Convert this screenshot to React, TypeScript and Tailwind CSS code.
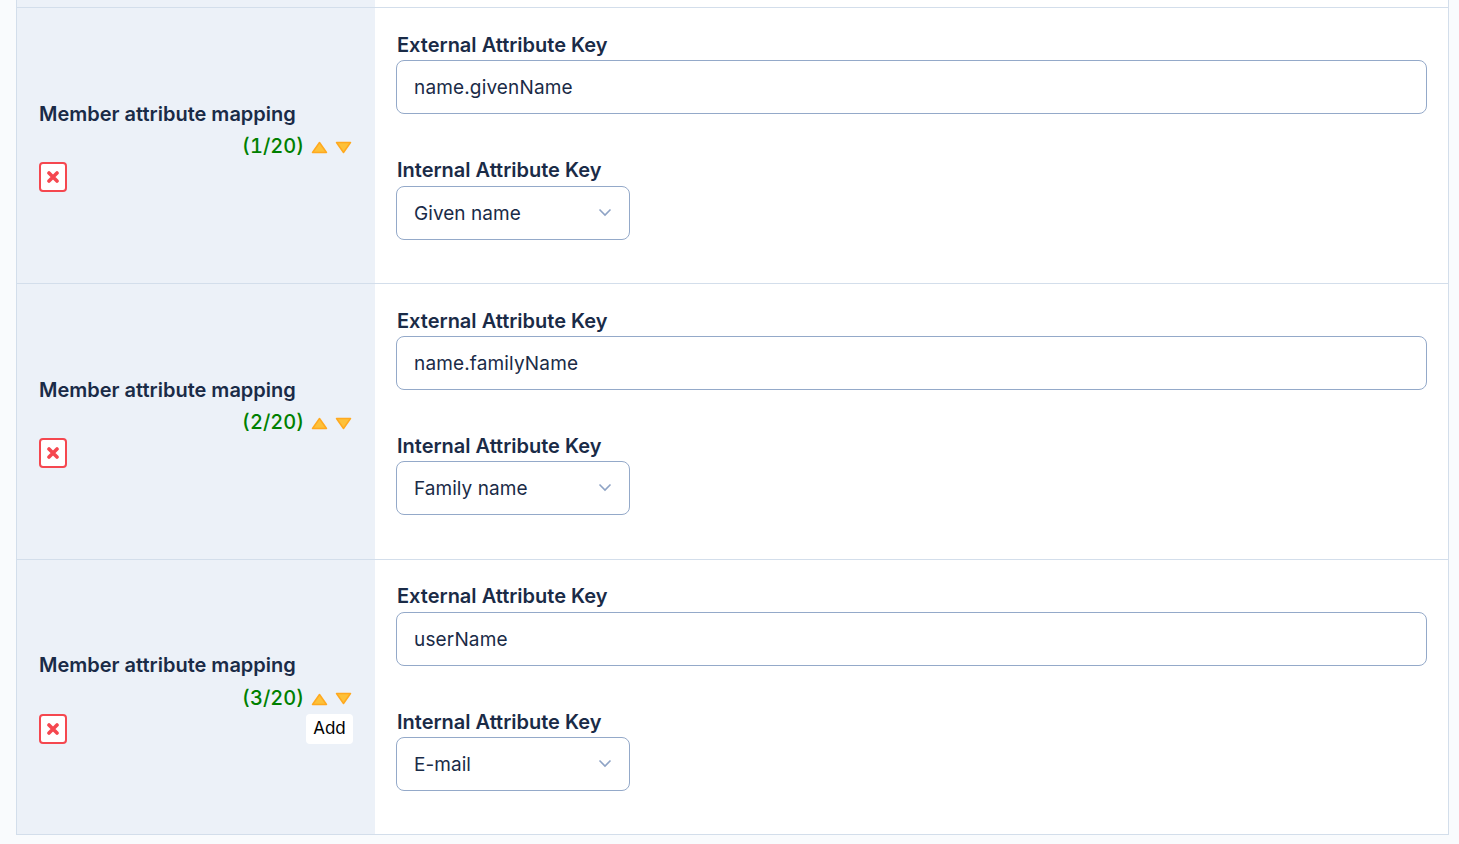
import React from "react";

const rows = [
  { n: 1, ext: "name.givenName", int: "Given name", h: "h-[276px]", gap: "mt-[41px] mb-[1px]", top: "pt-[22px]", lab: "" },
  { n: 2, ext: "name.familyName", int: "Family name", h: "h-[276px]", gap: "mt-[41px]", top: "pt-[22px]", lab: "" },
  { n: 3, ext: "userName", int: "E-mail", h: "h-[275px]", gap: "mt-[41px]", top: "pt-[21px]", lab: "mb-[1px]", add: true },
];

function Up() {
  return (
    <svg width="17" height="13" viewBox="0 0 17 13" aria-hidden="true">
      <path d="M8.5 1.5 L15.5 11.5 L1.5 11.5 Z" fill="#fdc13a" stroke="#ffa91f" strokeWidth="1.5" strokeLinejoin="round" />
    </svg>
  );
}
function Down() {
  return (
    <svg width="17" height="13" viewBox="0 0 17 13" aria-hidden="true">
      <path d="M1.5 1.5 L15.5 1.5 L8.5 11.5 Z" fill="#fdc13a" stroke="#ffa91f" strokeWidth="1.5" strokeLinejoin="round" />
    </svg>
  );
}

function Row({ r }: { r: (typeof rows)[number] }) {
  return (
    <div className={`flex ${r.h} border-t border-[#d3deeb]`}>
      <div className="w-[358px] shrink-0 bg-[#ecf1f8] pl-[22px] pr-[22px] pt-[2px] flex flex-col justify-center">
        <div className="text-[20px] leading-[26px] mb-[2px] font-semibold text-[#1a2b47]">Member attribute mapping</div>
        <div className="flex items-center justify-end h-[33px] text-[20px] font-medium text-[#008000] tabular-nums">
          <span className="mr-[7px] mt-[2px]">({r.n}/20)</span>
          <span className="flex mt-[5px] mr-[7px]"><Up /></span>
          <span className="flex mt-[4px] mr-[1px]"><Down /></span>
        </div>
        <div className="flex items-center justify-between h-[31px]">
          <button className="w-[28px] h-[30px] bg-white border-2 border-[#f5474f] rounded-[4px] flex items-center justify-center">
            <svg width="12" height="12" viewBox="0 0 12 12" aria-hidden="true">
              <path d="M2 2 L10 10 M10 2 L2 10" stroke="#f5474f" strokeWidth="3.6" strokeLinecap="round" />
            </svg>
          </button>
          {r.add && (
            <button className="h-[30px] w-[47px] bg-white rounded-[4px] text-[17px] text-black flex items-center justify-center">Add</button>
          )}
        </div>
      </div>
      <div className={`flex-1 bg-white pl-[21px] pr-[21px] ${r.top}`}>
        <div className={`text-[20px] leading-[30px] font-semibold text-[#1a2b47] pl-[1px] ${r.lab}`}>External Attribute Key</div>
        <input
          readOnly
          value={r.ext}
          className="block w-full h-[54px] border border-[#94a9c9] rounded-[8px] px-[17px] text-[19px] text-[#1a2b47] tracking-[0.15px] outline-none"
        />
        <div className={`text-[20px] leading-[30px] font-semibold text-[#1a2b47] pl-[1px] ${r.gap}`}>Internal Attribute Key</div>
        <div className="w-[234px] h-[54px] border border-[#94a9c9] rounded-[8px] pl-[17px] pr-[17px] flex items-center justify-between text-[19px] text-[#1a2b47] tracking-[0.05px]">
          <span className="pt-[2px]">{r.int}</span>
          <svg className="mb-[1px]" width="14" height="9" viewBox="0 0 14 9" aria-hidden="true">
            <path d="M1.5 1.5 L7 7 L12.5 1.5" fill="none" stroke="#8ea3c5" strokeWidth="1.6" />
          </svg>
        </div>
      </div>
    </div>
  );
}

export default function App() {
  return (
    <div className="h-[844px] bg-[#f9fbfd] overflow-hidden pl-[16px] pr-[10px] font-['Inter',sans-serif]">
      <div className="border-x border-b border-[#d3deeb]">
        <div className="flex h-[7px]">
          <div className="w-[358px] bg-[#ecf1f8]" />
          <div className="flex-1 bg-white" />
        </div>
        {rows.map((r) => (
          <Row key={r.n} r={r} />
        ))}
      </div>
    </div>
  );
}
